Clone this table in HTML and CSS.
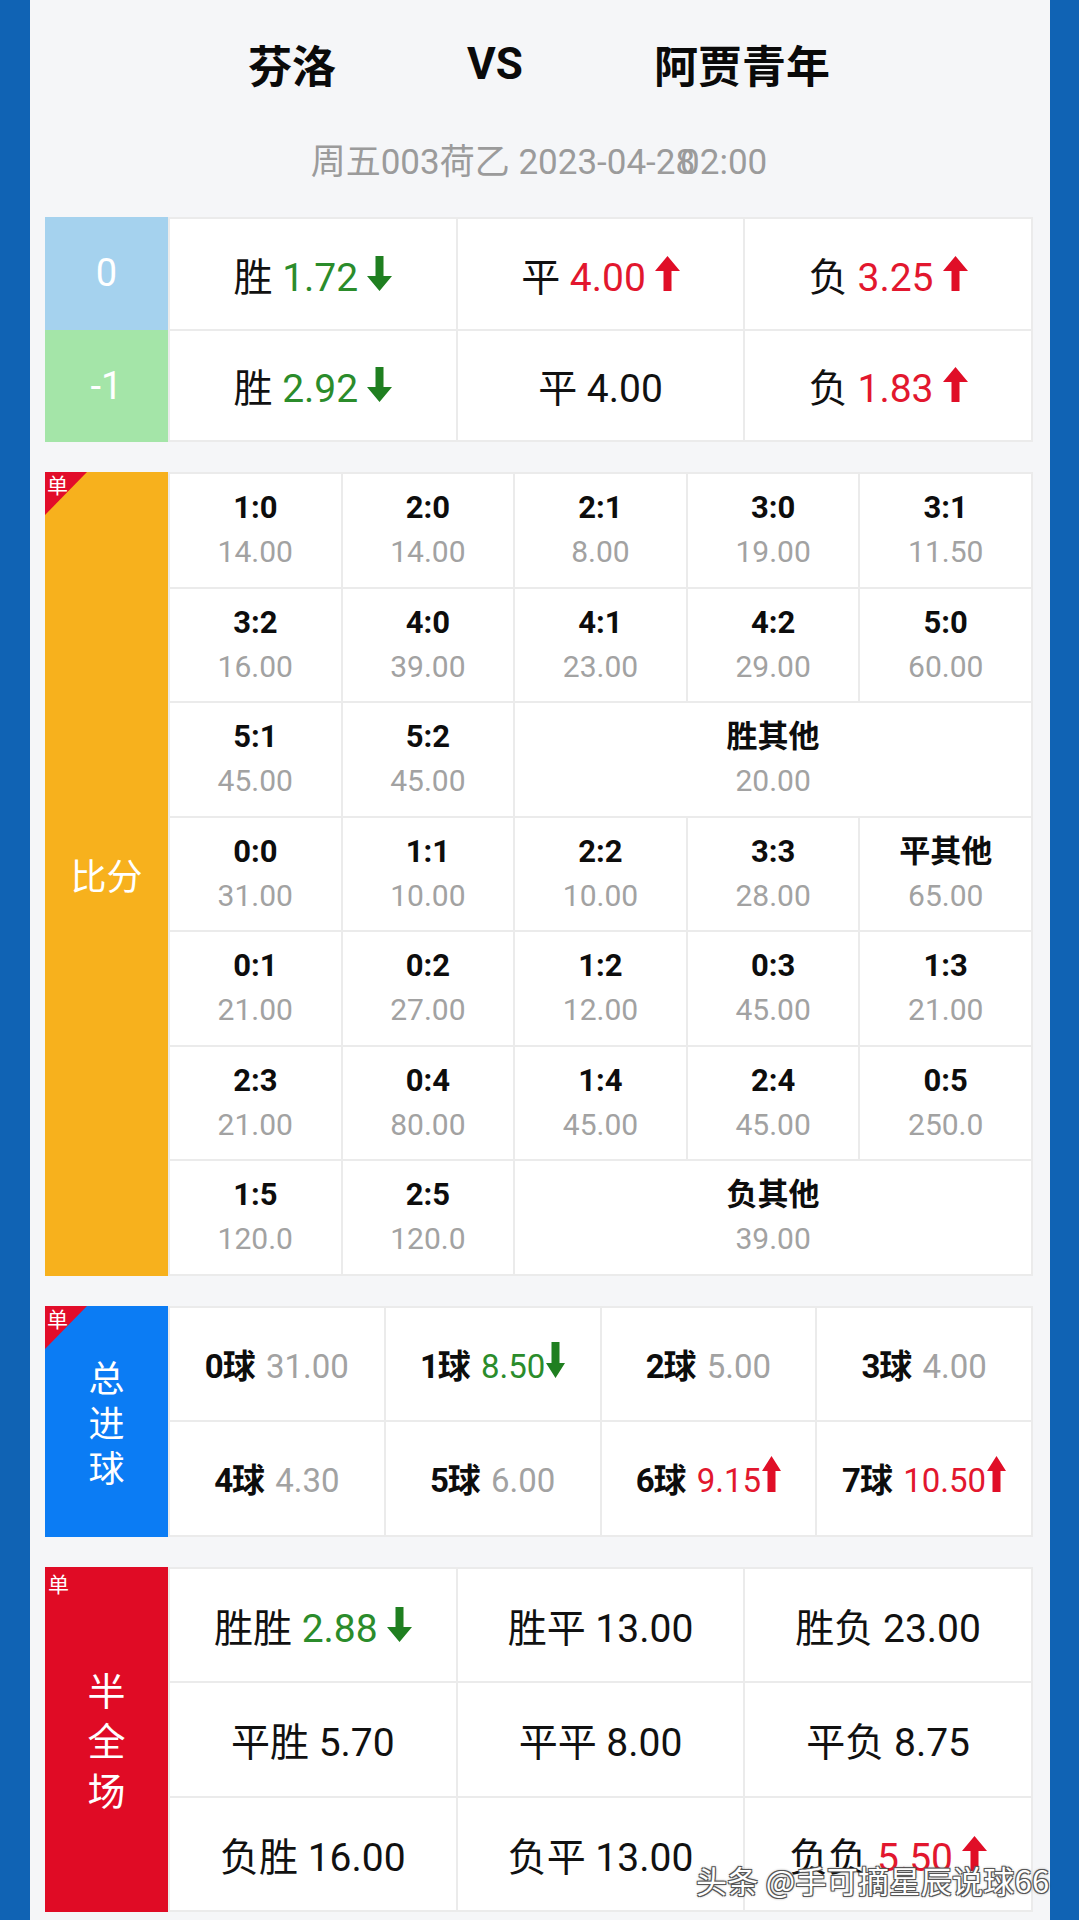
FILE: index.html
```html
<!DOCTYPE html>
<html lang="zh">
<head>
<meta charset="utf-8">
<title>芬洛 VS 阿贾青年</title>
<link rel="stylesheet" href="styles.css">
</head>
<body>
<div class="panel">
  <div class="title"><span>芬洛</span><span class="vs">VS</span><span>阿贾青年</span></div>
  <div class="date">周五003荷乙 2023-04-28<span class="time">02:00</span></div>

  <div class="tbl t1">
    <div class="lab-col">
      <div class="lab hcp0">0</div>
      <div class="lab hcp1">-1</div>
    </div>
    <div class="grid g3 rows-a">
      <div class="cell wdl"><span class="in">胜 <span class="up-g">1.72</span><svg class="arr dn" viewBox="0 0 25 35"><path d="M8.5 0h8v20H25L12.5 35 0 20h8.5z"/></svg></span></div>
      <div class="cell wdl"><span class="in">平 <span class="up-r">4.00</span><svg class="arr up" viewBox="0 0 25 35"><path d="M12.5 0 25 15h-8.5v20h-8V15H0z"/></svg></span></div>
      <div class="cell wdl"><span class="in">负 <span class="up-r">3.25</span><svg class="arr up" viewBox="0 0 25 35"><path d="M12.5 0 25 15h-8.5v20h-8V15H0z"/></svg></span></div>
      <div class="cell wdl"><span class="in">胜 <span class="up-g">2.92</span><svg class="arr dn" viewBox="0 0 25 35"><path d="M8.5 0h8v20H25L12.5 35 0 20h8.5z"/></svg></span></div>
      <div class="cell wdl"><span class="in">平 4.00</span></div>
      <div class="cell wdl"><span class="in">负 <span class="up-r">1.83</span><svg class="arr up" viewBox="0 0 25 35"><path d="M12.5 0 25 15h-8.5v20h-8V15H0z"/></svg></span></div>
    </div>
  </div>

  <div class="tbl">
    <div class="lab side orange"><span class="badge"><span class="badge-t">单</span></span>比分</div>
    <div class="grid g5 rows-b">
      <div class="cell sc"><b>1:0</b><i>14.00</i></div>
      <div class="cell sc"><b>2:0</b><i>14.00</i></div>
      <div class="cell sc"><b>2:1</b><i>8.00</i></div>
      <div class="cell sc"><b>3:0</b><i>19.00</i></div>
      <div class="cell sc"><b>3:1</b><i>11.50</i></div>
      <div class="cell sc"><b>3:2</b><i>16.00</i></div>
      <div class="cell sc"><b>4:0</b><i>39.00</i></div>
      <div class="cell sc"><b>4:1</b><i>23.00</i></div>
      <div class="cell sc"><b>4:2</b><i>29.00</i></div>
      <div class="cell sc"><b>5:0</b><i>60.00</i></div>
      <div class="cell sc"><b>5:1</b><i>45.00</i></div>
      <div class="cell sc"><b>5:2</b><i>45.00</i></div>
      <div class="cell sc span3"><b>胜其他</b><i>20.00</i></div>
      <div class="cell sc"><b>0:0</b><i>31.00</i></div>
      <div class="cell sc"><b>1:1</b><i>10.00</i></div>
      <div class="cell sc"><b>2:2</b><i>10.00</i></div>
      <div class="cell sc"><b>3:3</b><i>28.00</i></div>
      <div class="cell sc"><b>平其他</b><i>65.00</i></div>
      <div class="cell sc"><b>0:1</b><i>21.00</i></div>
      <div class="cell sc"><b>0:2</b><i>27.00</i></div>
      <div class="cell sc"><b>1:2</b><i>12.00</i></div>
      <div class="cell sc"><b>0:3</b><i>45.00</i></div>
      <div class="cell sc"><b>1:3</b><i>21.00</i></div>
      <div class="cell sc"><b>2:3</b><i>21.00</i></div>
      <div class="cell sc"><b>0:4</b><i>80.00</i></div>
      <div class="cell sc"><b>1:4</b><i>45.00</i></div>
      <div class="cell sc"><b>2:4</b><i>45.00</i></div>
      <div class="cell sc"><b>0:5</b><i>250.0</i></div>
      <div class="cell sc"><b>1:5</b><i>120.0</i></div>
      <div class="cell sc"><b>2:5</b><i>120.0</i></div>
      <div class="cell sc span3"><b>负其他</b><i>39.00</i></div>
    </div>
  </div>

  <div class="tbl">
    <div class="lab side blue"><span class="badge"><span class="badge-t">单</span></span><span class="vert v45">总<br>进<br>球</span></div>
    <div class="grid g4 rows-b">
      <div class="cell goals"><span class="in"><b>0球</b> <i>31.00</i></span></div>
      <div class="cell goals"><span class="in"><b>1球</b> <span class="up-g">8.50</span><svg class="arr2 dn" viewBox="0 0 19 36"><path d="M5.5 0h8v21H19L9.5 36 0 21h5.5z"/></svg></span></div>
      <div class="cell goals"><span class="in"><b>2球</b> <i>5.00</i></span></div>
      <div class="cell goals"><span class="in"><b>3球</b> <i>4.00</i></span></div>
      <div class="cell goals"><span class="in"><b>4球</b> <i>4.30</i></span></div>
      <div class="cell goals"><span class="in"><b>5球</b> <i>6.00</i></span></div>
      <div class="cell goals"><span class="in"><b>6球</b> <span class="up-r">9.15</span><svg class="arr2 up" viewBox="0 0 19 36"><path d="M9.5 0 19 15h-5.5v21h-8V15H0z"/></svg></span></div>
      <div class="cell goals"><span class="in"><b>7球</b> <span class="up-r">10.50</span><svg class="arr2 up" viewBox="0 0 19 36"><path d="M9.5 0 19 15h-5.5v21h-8V15H0z"/></svg></span></div>
    </div>
  </div>

  <div class="tbl">
    <div class="lab side red"><span class="badge-t plain">单</span><span class="vert v50">半<br>全<br>场</span></div>
    <div class="grid g3 rows-b">
      <div class="cell wdl"><span class="in">胜胜 <span class="up-g">2.88</span><svg class="arr dn" viewBox="0 0 25 35"><path d="M8.5 0h8v20H25L12.5 35 0 20h8.5z"/></svg></span></div>
      <div class="cell wdl"><span class="in">胜平 13.00</span></div>
      <div class="cell wdl"><span class="in">胜负 23.00</span></div>
      <div class="cell wdl"><span class="in">平胜 5.70</span></div>
      <div class="cell wdl"><span class="in">平平 8.00</span></div>
      <div class="cell wdl"><span class="in">平负 8.75</span></div>
      <div class="cell wdl"><span class="in">负胜 16.00</span></div>
      <div class="cell wdl"><span class="in">负平 13.00</span></div>
      <div class="cell wdl"><span class="in">负负 <span class="up-r">5.50</span><svg class="arr up" viewBox="0 0 25 35"><path d="M12.5 0 25 15h-8.5v20h-8V15H0z"/></svg></span></div>
    </div>
  </div>

  <div class="watermark">头条 @手可摘星辰说球66</div>
</div>
</body>
</html>
```
FILE: styles.css
```css
html, body {
  margin: 0;
  padding: 0;
}
body {
  width: 1079px;
  height: 1920px;
  overflow: hidden;
  background: #1063b4;
  font-family: "Roboto", "Noto Sans CJK SC", sans-serif;
  color: #111;
}
.panel {
  position: relative;
  margin-left: 30px;
  width: 1020px;
  height: 1920px;
  background: #f5f6f8;
  padding: 0 17px 0 15px;
  box-sizing: border-box;
}
.title {
  display: flex;
  justify-content: center;
  gap: 131px;
  padding-top: 34px;
  font-family: "Noto Sans CJK SC", sans-serif;
  font-weight: 700;
  font-size: 44px;
  line-height: 60px;
  color: #0a0a0a;
}
.title .vs {
  font-family: "Roboto", sans-serif;
}
.date {
  margin-top: 48px;
  text-align: center;
  font-size: 35px;
  line-height: 42px;
  color: #9b9b9b;
  font-family: "Roboto", "Noto Sans CJK SC", sans-serif;
}
.date .time {
  margin-left: -15px;
}
.tbl {
  display: flex;
  margin-top: 30px;
}
.tbl.t1 {
  margin-top: 33px;
}
.lab-col {
  width: 123px;
  flex: none;
  display: flex;
  flex-direction: column;
}
.lab {
  color: #fff;
  display: flex;
  align-items: center;
  justify-content: center;
  font-size: 38px;
}
.lab-col .lab {
  flex: 1;
  font-family: "Roboto", sans-serif;
}
.hcp0 { background: #a5d2ee; }
.hcp1 { background: #a4e5a8; }
.side {
  width: 123px;
  flex: none;
  position: relative;
  font-family: "Noto Sans CJK SC", sans-serif;
  font-size: 36px;
}
.orange { background: #f7b11d; }
.blue { background: #0b7cf4; }
.red { background: #e00b25; }
.vert {
  text-align: center;
}
.v45 { line-height: 45px; }
.v50 { line-height: 50px; font-size: 38px; }
.badge {
  position: absolute;
  left: 0;
  top: 0;
  width: 0;
  height: 0;
  border-top: 43px solid #e20d2a;
  border-right: 42px solid transparent;
}
.badge-t {
  position: absolute;
  left: 2px;
  top: -45px;
  font-size: 21px;
  line-height: 28px;
  color: #fff;
  font-family: "Noto Sans CJK SC", sans-serif;
}
.badge-t.plain {
  top: 2px;
  left: 3px;
}
.grid {
  flex: 1;
  display: grid;
  gap: 2px;
  padding: 2px;
  background: #ebebeb;
}
.g3 { grid-template-columns: repeat(3, 1fr); }
.g4 { grid-template-columns: repeat(4, 1fr); }
.g5 { grid-template-columns: repeat(5, 1fr); }
.rows-a { grid-auto-rows: 109.5px; }
.rows-b { grid-auto-rows: 112.5px; }
.cell {
  background: #fff;
  display: flex;
  align-items: center;
  justify-content: center;
}
.in {
  white-space: nowrap;
}
.wdl {
  font-size: 39px;
  color: #111;
}
.up-g { color: #2b8c2b; }
.up-r { color: #e2172e; }
.arr {
  display: inline-block;
  width: 25px;
  height: 35px;
  margin-left: 9px;
  vertical-align: baseline;
}
.arr2 {
  display: inline-block;
  width: 19px;
  height: 36px;
  margin-left: 1px;
  vertical-align: baseline;
}
.dn { fill: #1f7f20; }
.up { fill: #e00e27; }
.sc {
  flex-direction: column;
}
.sc b {
  font-weight: 700;
  font-size: 31px;
  line-height: 44px;
  color: #0d0d0d;
  font-family: "Roboto", "Noto Sans CJK SC", sans-serif;
}
.sc i {
  font-style: normal;
  font-size: 30px;
  line-height: 44px;
  color: #a2a2a2;
}
.span3 { grid-column: span 3; }
.goals {
  font-size: 33px;
}
.goals b {
  font-weight: 700;
  letter-spacing: -1px;
  margin-right: 3px;
  color: #0d0d0d;
}
.goals i {
  font-style: normal;
  color: #a2a2a2;
}
.watermark {
  position: absolute;
  left: 666px;
  top: 1861px;
  font-family: "Noto Sans CJK SC", sans-serif;
  font-size: 31px;
  line-height: 38px;
  letter-spacing: 0.3px;
  color: #fff;
  white-space: nowrap;
  text-shadow: -1px -1px 0 #555, 1px -1px 0 #555, -1px 1px 0 #555, 1px 1px 0 #555, 0 0 3px #333;
}
```
